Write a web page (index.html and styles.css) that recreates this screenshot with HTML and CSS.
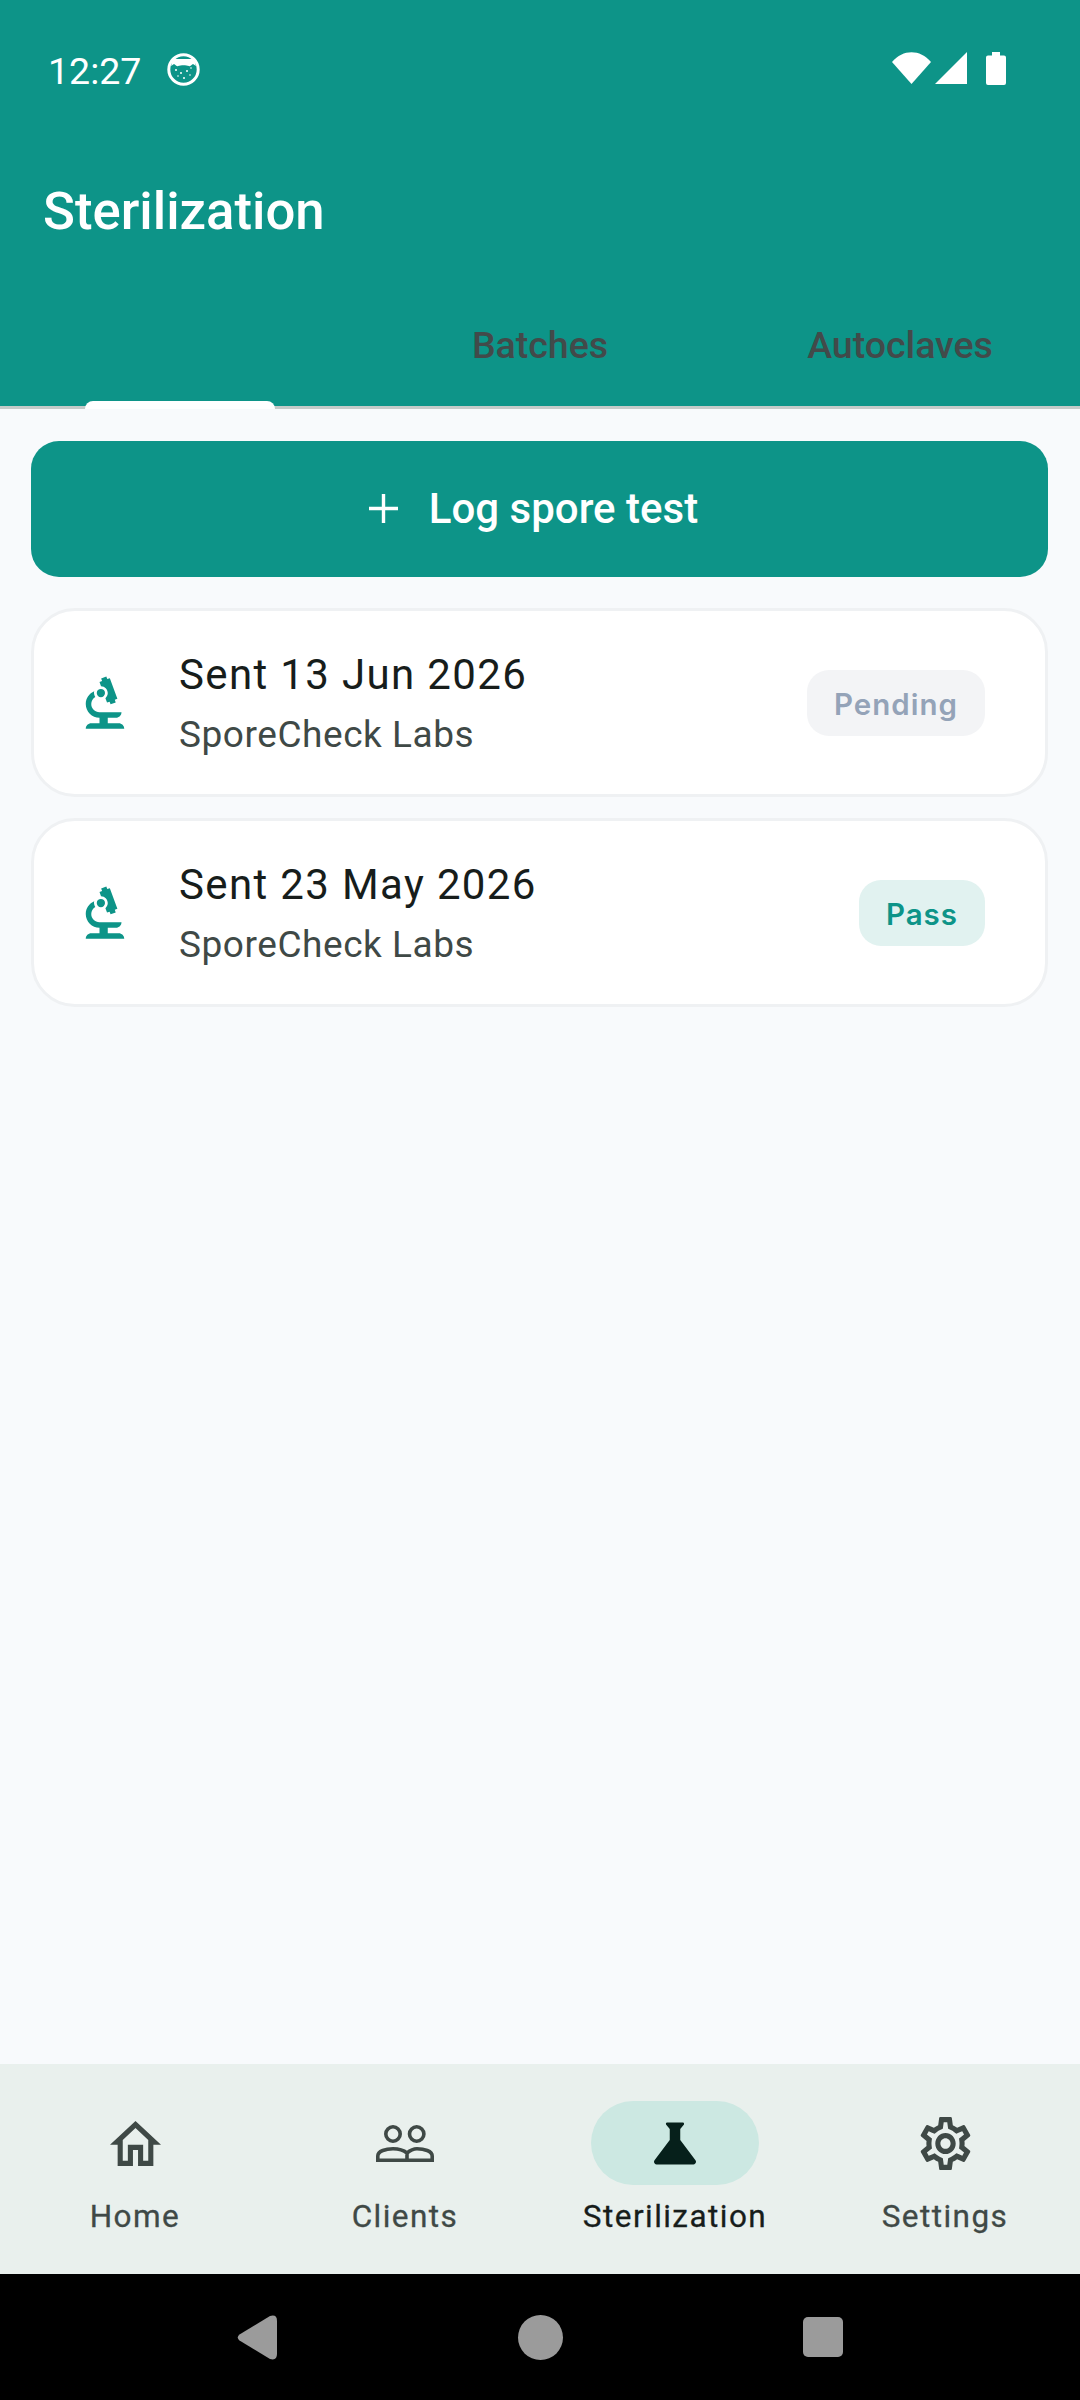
FILE: index.html
```html
<!DOCTYPE html>
<html lang="en">
<head>
	<meta charset="UTF-8">
	<title>Sterilization</title>
	<link rel="stylesheet" href="styles.css">
</head>
<body>
	<div class="screen">
		<header class="header">
			<div class="status">
				<span class="time">12:27</span>
				<svg class="status-app" viewBox="0 0 33 33">
					<circle cx="16.5" cy="16.5" r="14.7" fill="none" stroke="#fff" stroke-width="3"/>
					<path d="M4 13 L6 6 L27 6 L29 13 L26 11 C24 12 23 14 22 13 C19 12 14 12 11 13 C10 14 9 12 7 11Z" fill="#fff"/>
					<g fill="#fff"><circle cx="9" cy="17" r="1"/><circle cx="14" cy="20" r="1"/><circle cx="20" cy="18" r="1"/><circle cx="24" cy="15" r=".8"/><circle cx="17" cy="25" r="1"/><circle cx="11" cy="23" r=".8"/><circle cx="23" cy="22" r=".8"/></g>
				</svg>
				<span class="status-right">
					<svg class="wifi" viewBox="0 0 39 32"><path d="M0 10 C11 -3 28 -3 39 10 L19.5 32Z" fill="#fff"/></svg>
					<svg class="signal" viewBox="0 0 32 32"><path d="M32 0 V32 H0Z" fill="#fff"/></svg>
					<svg class="battery" viewBox="0 0 20 33"><path d="M6 0 H14 V3.5 H18 Q20 3.5 20 5.5 V31 Q20 33 18 33 H2 Q0 33 0 31 V5.5 Q0 3.5 2 3.5 H6Z" fill="#fff"/></svg>
				</span>
			</div>
			<h1 class="title">Sterilization</h1>
			<nav class="tabs">
				<div class="tab tab-active"><span class="indicator"></span></div>
				<div class="tab">Batches</div>
				<div class="tab">Autoclaves</div>
			</nav>
		</header>

		<main class="content">
			<button class="log-btn">
				<svg class="plus" viewBox="0 0 29 29"><path d="M14.5 0 V29 M0 14.5 H29" stroke="#fff" stroke-width="3.4" fill="none"/></svg>
				<span>Log spore test</span>
			</button>

			<div class="card">
				<svg class="biotech" viewBox="0 0 24 24"><path d="M7 19c-1.100 0-2 .9-2 2h14c0-1.100-.9-2-2-2h-4v-2h3c1.100 0 2-.9 2-2h-8c-1.660 0-3-1.340-3-3 0-1.090.59-2.040 1.460-2.560C8.170 9.030 8 8.540 8 8c0-.21.04-.42.09-.62C6.280 8.130 5 9.920 5 12c0 2.760 2.240 5 5 5v2H7z"/><circle cx="10.500" cy="8" r="1.500"/><path d="M10.560 5.510C11.910 5.540 13 6.640 13 8c0 .75-.33 1.410-.85 1.870l.59 1.620.94-.34.34.94 1.880-.68-.34-.94.94-.34-2.740-7.520-.94.34-.34-.94-1.880.68.34.94-.94.35.56 1.530z"/></svg>
				<div class="card-text">
					<div class="card-title">Sent 13 Jun 2026</div>
					<div class="card-sub">SporeCheck Labs</div>
				</div>
				<span class="pill pill-pending">Pending</span>
			</div>

			<div class="card">
				<svg class="biotech" viewBox="0 0 24 24"><path d="M7 19c-1.100 0-2 .9-2 2h14c0-1.100-.9-2-2-2h-4v-2h3c1.100 0 2-.9 2-2h-8c-1.660 0-3-1.340-3-3 0-1.090.59-2.040 1.460-2.560C8.170 9.030 8 8.540 8 8c0-.21.04-.42.09-.62C6.280 8.130 5 9.920 5 12c0 2.760 2.240 5 5 5v2H7z"/><circle cx="10.500" cy="8" r="1.500"/><path d="M10.560 5.510C11.910 5.540 13 6.640 13 8c0 .75-.33 1.410-.85 1.870l.59 1.620.94-.34.34.94 1.880-.68-.34-.94.94-.34-2.740-7.520-.94.34-.34-.94-1.880.68.34.94-.94.35.56 1.530z"/></svg>
				<div class="card-text">
					<div class="card-title">Sent 23 May 2026</div>
					<div class="card-sub">SporeCheck Labs</div>
				</div>
				<span class="pill pill-pass">Pass</span>
			</div>
		</main>

		<nav class="bottom-nav">
			<div class="nav-item">
				<div class="nav-icon">
					<svg class="ic-home" viewBox="2 3 20 17" preserveAspectRatio="none"><path d="M12 5.690l5 4.500V18h-2v-6H9v6H7v-7.810l5-4.500M12 3L2 12h3v8h6v-6h2v6h6v-8h3L12 3z"/></svg>
				</div>
				<span class="nav-label">Home</span>
			</div>
			<div class="nav-item">
				<div class="nav-icon">
					<svg class="ic-clients" viewBox="0 0 58 37" fill="none" stroke="#3f4946" stroke-width="3.600">
						<circle cx="17" cy="9" r="7.200"/>
						<circle cx="40.700" cy="9" r="7.200"/>
						<path d="M1.800 35.200 V31 C1.800 26 10 23.800 17 23.800 C23 23.800 28 25.500 31 28 C34 25.500 37 23.800 41 23.800 C48 23.800 56.200 26 56.200 31 V35.200Z M31 28 V35"/>
					</svg>
				</div>
				<span class="nav-label">Clients</span>
			</div>
			<div class="nav-item nav-active">
				<div class="nav-icon">
					<svg class="ic-flask" viewBox="4 4 16 16"><path d="M19.800 18.400L14 10.670V6.500l1.350-1.690c.26-.33.03-.81-.39-.81H9.040c-.42 0-.65.48-.39.81L10 6.500v4.170L4.200 18.400c-.49.66-.02 1.600.8 1.600h14c.82 0 1.290-.94.8-1.600z"/></svg>
				</div>
				<span class="nav-label">Sterilization</span>
			</div>
			<div class="nav-item">
				<div class="nav-icon">
					<svg class="ic-gear" viewBox="2 2 20 20" preserveAspectRatio="none"><path d="M19.430 12.980c.04-.32.07-.64.07-.98 0-.34-.03-.66-.07-.98l2.110-1.650c.19-.15.24-.42.12-.64l-2-3.460c-.09-.16-.26-.25-.44-.25-.06 0-.12.01-.17.03l-2.490 1c-.52-.4-1.080-.73-1.690-.98l-.38-2.650C14.460 2.180 14.250 2 14 2h-4c-.25 0-.46.18-.49.42l-.38 2.650c-.61.25-1.170.59-1.690.98l-2.490-1c-.06-.02-.12-.03-.18-.03-.17 0-.34.09-.43.25l-2 3.460c-.13.22-.07.49.12.64l2.110 1.650c-.04.32-.07.65-.07.98 0 .33.03.66.07.98l-2.110 1.650c-.19.15-.24.42-.12.64l2 3.460c.09.16.26.25.44.25.06 0 .12-.01.17-.03l2.490-1c.52.4 1.080.73 1.690.98l.38 2.650c.03.24.24.42.49.42h4c.25 0 .46-.18.49-.42l.38-2.650c.61-.25 1.170-.59 1.690-.98l2.490 1c.06.02.12.03.18.03.17 0 .34-.09.43-.25l2-3.460c.12-.22.07-.49-.12-.64l-2.110-1.650zm-1.980-1.710c.04.31.05.52.05.73 0 .21-.02.43-.05.73l-.14 1.130.89.7 1.080.84-.7 1.210-1.270-.51-1.040-.42-.9.68c-.43.32-.84.56-1.250.73l-1.060.43-.16 1.130-.2 1.350h-1.400l-.19-1.350-.16-1.130-1.060-.43c-.43-.18-.83-.41-1.230-.71l-.91-.7-1.060.43-1.270.51-.7-1.210 1.080-.84.89-.7-.14-1.130c-.03-.31-.05-.54-.05-.74s.02-.43.05-.73l.14-1.130-.89-.7-1.080-.84.7-1.210 1.270.51 1.040.42.9-.68c.43-.32.84-.56 1.250-.73l1.060-.43.16-1.130.2-1.350h1.390l.19 1.350.16 1.130 1.060.43c.43.18.83.41 1.230.71l.91.7 1.060-.43 1.270-.51.7 1.210-1.070.85-.89.7.14 1.130zM12 8c-2.210 0-4 1.790-4 4s1.790 4 4 4 4-1.790 4-4-1.790-4-4-4zm0 6c-1.100 0-2-.9-2-2s.9-2 2-2 2 .9 2 2-.9 2-2 2z"/></svg>
				</div>
				<span class="nav-label">Settings</span>
			</div>
		</nav>

		<div class="sys-nav">
			<svg class="sys-back" viewBox="0 0 40 45"><path d="M2.500 19.500 L33 1 Q40 -1 40 6 V39 Q40 46 33 44 L2.500 25.500 Q-1 22.500 2.500 19.500Z"/></svg>
			<span class="sys-home"></span>
			<span class="sys-recent"></span>
		</div>
	</div>
</body>
</html>
```

FILE: styles.css
```css
* {
	box-sizing: border-box;
}
html, body {
	margin: 0;
	padding: 0;
}
body {
	font-family: Roboto, sans-serif;
}
.screen {
	width: 1080px;
	height: 2400px;
	display: flex;
	flex-direction: column;
	overflow: hidden;
	background: #f8fafc;
}

/* header */
.header {
	background: #0d9488;
	color: #fff;
}
.status {
	height: 136px;
	display: flex;
	align-items: center;
	padding: 0 74px 0 48px;
}
.time {
	font-size: 37.5px;
	line-height: 44px;
	padding-top: 6px;
}
.status-app {
	width: 33px;
	height: 33px;
	margin: 3px 0 0 26px;
}
.status-right {
	margin-left: auto;
	display: flex;
	align-items: flex-start;
}
.wifi {
	width: 39px;
	height: 32px;
}
.signal {
	width: 32px;
	height: 32px;
	margin-left: 4px;
}
.battery {
	width: 20px;
	height: 33px;
	margin-left: 19px;
}
.title {
	margin: 42px 0 0 43px;
	font-size: 52.7px;
	line-height: 67px;
	font-weight: 500;
}
.tabs {
	display: grid;
	grid-template-columns: repeat(3, 1fr);
	height: 165px;
	border-bottom: 3px solid #c4cbc9;
	margin-top: -1px;
}
.tab {
	position: relative;
	display: flex;
	align-items: center;
	justify-content: center;
	padding-top: 39px;
	color: #424a4a;
	font-size: 37.5px;
	font-weight: 500;
}
.indicator {
	position: absolute;
	left: 85px;
	bottom: -3px;
	width: 190px;
	height: 8px;
	background: #fff;
	border-radius: 8px 8px 0 0;
}

/* list */
.content {
	flex: 1;
	padding: 32px 32px 0 31px;
}
.log-btn {
	width: 100%;
	height: 136px;
	border: 0;
	border-radius: 28px;
	padding: 0 12px 2px 0;
	background: #0d9488;
	color: #fff;
	display: flex;
	align-items: center;
	justify-content: center;
	font-family: Roboto, sans-serif;
	font-size: 42px;
	font-weight: 500;
}
.plus {
	width: 29px;
	height: 29px;
	margin-right: 31px;
}
.card {
	height: 189px;
	margin-top: 21px;
	display: flex;
	align-items: center;
	background: #fff;
	border: 3px solid #eff1f3;
	border-radius: 44px;
	padding: 0 60px 0 38px;
}
.log-btn + .card {
	margin-top: 31px;
}
.biotech {
	width: 66px;
	height: 66px;
	margin-top: 2px;
	fill: #0d9488;
}
.card-text {
	flex: 1;
	margin-left: 41px;
}
.card-title {
	font-size: 42px;
	line-height: 58px;
	letter-spacing: 1.35px;
	color: #171d1b;
}
.card-sub {
	margin-top: 6px;
	font-size: 37px;
	line-height: 50px;
	letter-spacing: .55px;
	color: #3f4946;
}
.pill {
	height: 66px;
	border-radius: 22px;
	padding: 2px 27px 0;
	display: flex;
	align-items: center;
	font-family: Inter, sans-serif;
	font-size: 29.5px;
	font-weight: 600;
	letter-spacing: 1px;
}
.pill-pending {
	background: #f3f4f6;
	color: #94a3b8;
}
.pill-pass {
	background: #e1f2f0;
	color: #0d9488;
}

/* bottom nav */
.bottom-nav {
	height: 210px;
	background: #e9f0ed;
	display: grid;
	grid-template-columns: repeat(4, 1fr);
	padding-top: 37px;
}
.nav-item {
	display: flex;
	flex-direction: column;
	align-items: center;
	color: #3f4946;
}
.nav-icon {
	width: 168px;
	height: 84px;
	border-radius: 42px;
	display: flex;
	align-items: center;
	justify-content: center;
}
.nav-active .nav-icon {
	background: #cce8e2;
}
.nav-active {
	color: #171d1b;
}
.nav-label {
	margin-top: 12px;
	font-size: 31.5px;
	line-height: 40px;
	letter-spacing: 1.45px;
	-webkit-text-stroke: .3px currentColor;
}
.ic-home {
	width: 51px;
	height: 45px;
	fill: #3f4946;
}
.ic-clients {
	width: 58px;
	height: 37px;
}
.ic-flask {
	width: 42px;
	height: 43px;
	fill: #06201b;
}
.ic-gear {
	width: 51px;
	height: 53px;
	fill: #3f4946;
}

/* android nav */
.sys-nav {
	height: 126px;
	background: #000;
	display: grid;
	grid-template-columns: 237px 40px 241px 45px 240px 40px;
	align-items: center;
}
.sys-back {
	grid-column: 2;
	width: 40px;
	height: 45px;
	fill: #9b9b9b;
}
.sys-home {
	grid-column: 4;
	width: 45px;
	height: 45px;
	border-radius: 50%;
	background: #9b9b9b;
}
.sys-recent {
	grid-column: 6;
	width: 40px;
	height: 40px;
	border-radius: 5px;
	background: #9b9b9b;
}
```
